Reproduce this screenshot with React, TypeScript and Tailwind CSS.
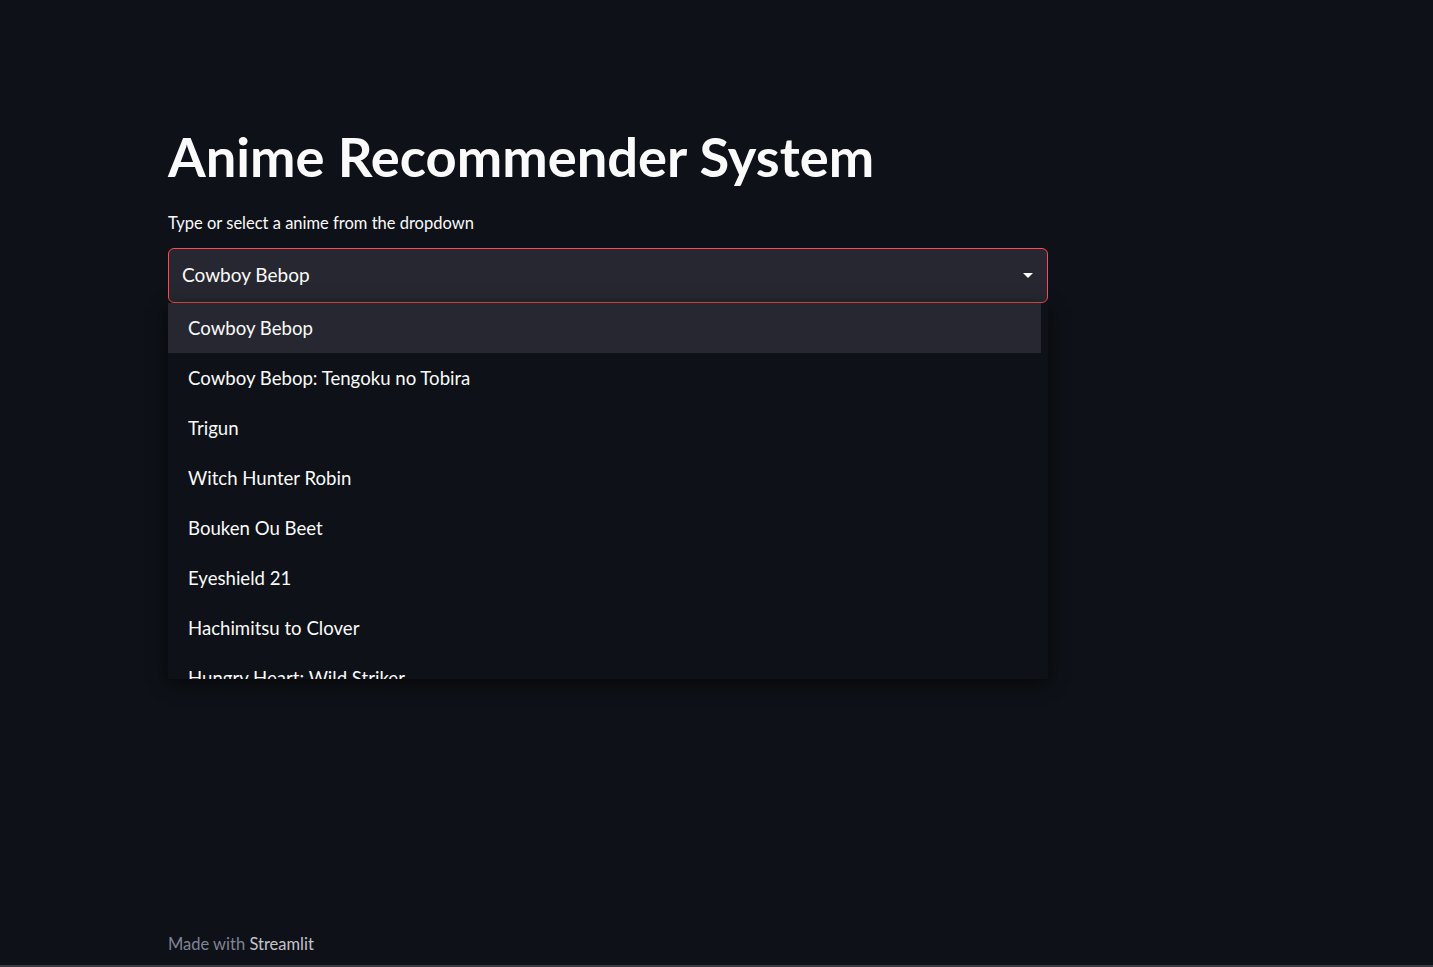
import { useState } from 'react';

const options = [
  'Cowboy Bebop',
  'Cowboy Bebop: Tengoku no Tobira',
  'Trigun',
  'Witch Hunter Robin',
  'Bouken Ou Beet',
  'Eyeshield 21',
  'Hachimitsu to Clover',
  'Hungry Heart: Wild Striker',
];

export default function App() {
  const [selected] = useState('Cowboy Bebop');

  return (
    <div
      className="min-h-[967px] h-[967px] w-full bg-[#0e1117] text-[#fafafa] flex flex-col overflow-hidden"
      style={{ fontFamily: '"Source Sans Pro", Lato, sans-serif' }}
    >
      <main className="flex-1 pl-[168px] pt-[124px]">
        <div className="w-[880px]">
          {/* Title */}
          <h1 className="text-[54.3px] leading-[64px] font-bold tracking-[0px] text-[#fafafa]">
            Anime Recommender System
          </h1>

          {/* Select */}
          <label className="block mt-[23px] text-[16.5px] leading-[24px] text-[#fafafa]">
            Type or select a anime from the dropdown
          </label>
          <div className="relative mt-[13px]">
            <div className="h-[55px] flex items-center justify-between rounded-[6px] border border-[#ff4b4b] bg-[#262730] pl-[13px] pr-[13px]">
              <span className="text-[19px] text-[#fafafa]">{selected}</span>
              <svg width="12" height="7" viewBox="0 0 12 7">
                <path d="M1 1h10L6 6z" fill="#fafafa" />
              </svg>
            </div>

            {/* Dropdown list */}
            <div className="absolute left-0 top-[55px] w-[880px] h-[376px] overflow-hidden bg-[#0e1117] shadow-[0_4px_16px_rgba(0,0,0,0.6)]">
              <ul className="w-[873px]">
                {options.map((o, i) => (
                  <li
                    key={o}
                    className={
                      'h-[50px] flex items-center pl-[20px] pt-[2px] text-[18.6px] text-[#fafafa] ' +
                      (i === 0 ? 'bg-[#262730]' : '')
                    }
                  >
                    {o}
                  </li>
                ))}
              </ul>
            </div>
          </div>
        </div>
      </main>

      <footer className="pl-[168px] pb-[9px] text-[16.5px] leading-[24px]">
        <span className="text-[#808495]">Made with </span>
        <span className="text-[#c4c4cc]">Streamlit</span>
      </footer>
      <div className="h-[2px] bg-[#3a3b42]" />
    </div>
  );
}
